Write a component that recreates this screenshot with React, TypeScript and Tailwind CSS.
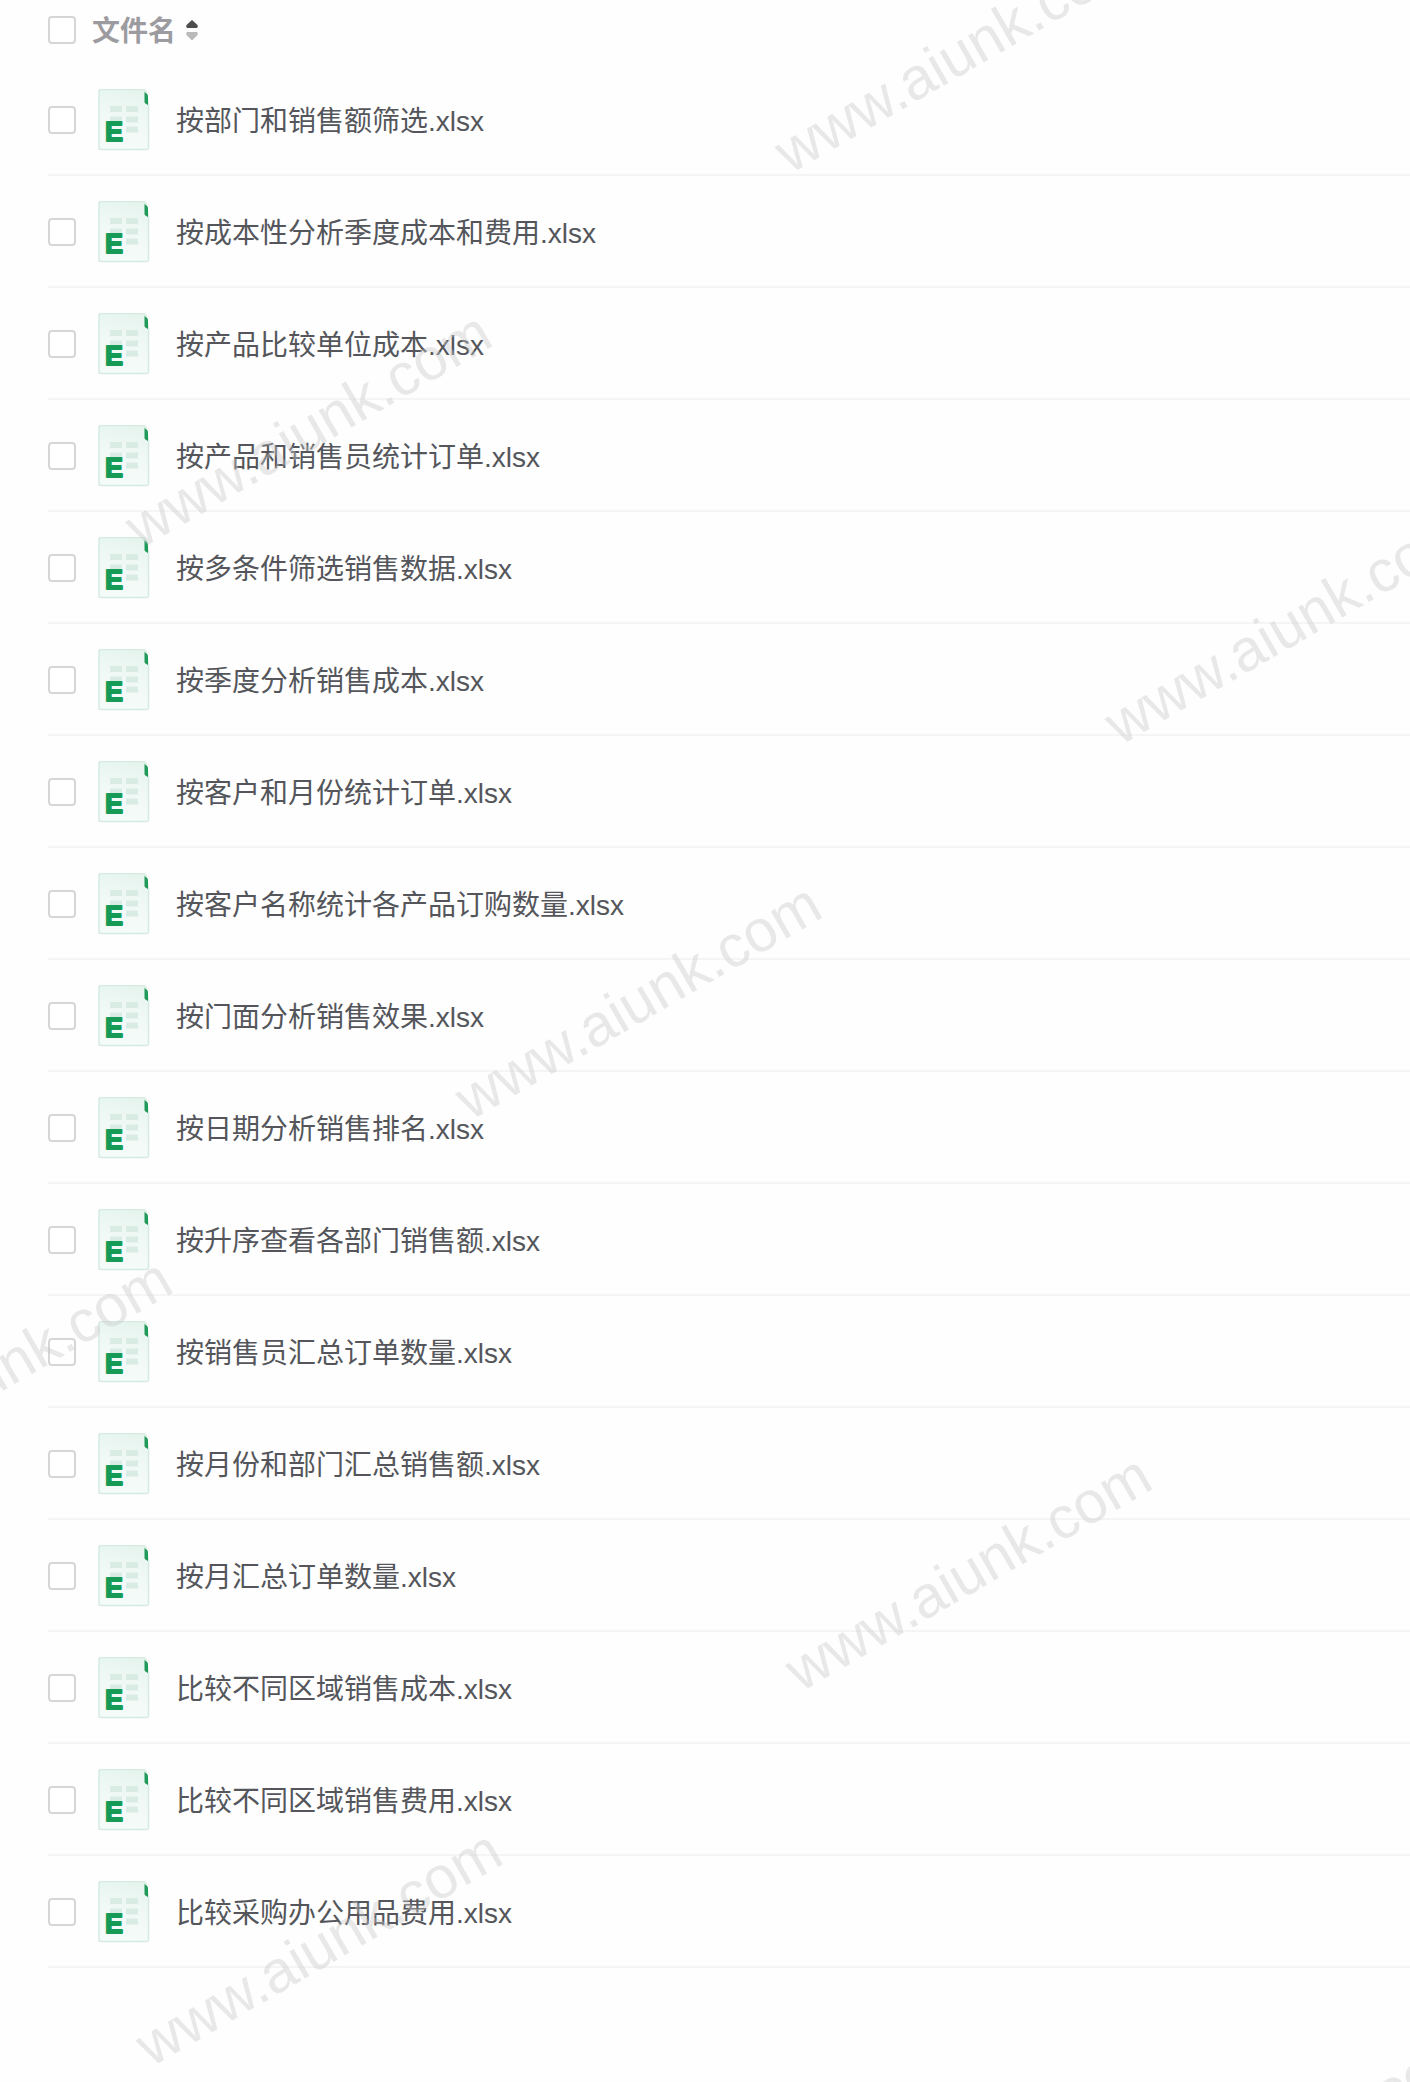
import { useState } from "react";

const files = [
  "按部门和销售额筛选.xlsx",
  "按成本性分析季度成本和费用.xlsx",
  "按产品比较单位成本.xlsx",
  "按产品和销售员统计订单.xlsx",
  "按多条件筛选销售数据.xlsx",
  "按季度分析销售成本.xlsx",
  "按客户和月份统计订单.xlsx",
  "按客户名称统计各产品订购数量.xlsx",
  "按门面分析销售效果.xlsx",
  "按日期分析销售排名.xlsx",
  "按升序查看各部门销售额.xlsx",
  "按销售员汇总订单数量.xlsx",
  "按月份和部门汇总销售额.xlsx",
  "按月汇总订单数量.xlsx",
  "比较不同区域销售成本.xlsx",
  "比较不同区域销售费用.xlsx",
  "比较采购办公用品费用.xlsx",
];

const checkboxClass =
  "block size-7 shrink-0 appearance-none rounded border-2 border-[#d6d6d8] bg-white checked:border-[#169b57] checked:bg-[#169b57]";

const SheetIcon = () => (
  <svg className="h-[62px] w-[52px] shrink-0" viewBox="0 0 52 62" aria-hidden="true">
    <defs>
      <linearGradient id="sheet" x1="0.6" y1="0" x2="0.4" y2="1">
        <stop offset="0" stopColor="#e6f4ee" />
        <stop offset="0.5" stopColor="#f1f9f6" />
        <stop offset="1" stopColor="#f5fbf9" />
      </linearGradient>
    </defs>
    <path
      d="M3 0.500H45Q47 0.500 48 2.500L50.500 16V58.500Q50.500 60.500 48.500 60.500H3Q1 60.500 1 58.500V2.500Q1 0.500 3 0.500Z"
      fill="url(#sheet)"
      stroke="#d5ebe2"
      strokeWidth="1.500"
    />
    <path d="M46.500 3L49 5Q50 6 50 7.500V16L47.500 14.500Q46.500 13.800 46.500 12.500Z" fill="#1f9a5a" />
    <g fill="#d9ece4">
      <rect x="12" y="17" width="12" height="6" />
      <rect x="28" y="17" width="12" height="6" />
      <rect x="12" y="27.500" width="12" height="6" />
      <rect x="28" y="27.500" width="12" height="6" />
      <rect x="28" y="37.500" width="12" height="6" />
    </g>
    <text
      x="7"
      y="52"
      fontSize="27"
      fontWeight="700"
      fontFamily="Liberation Sans, sans-serif"
      fill="#169b57"
      stroke="#169b57"
      strokeWidth="1.800"
      strokeLinejoin="round"
    >
      E
    </text>
  </svg>
);

const SortIcon = () => (
  <svg className="h-[22px] w-3" viewBox="0 0 12 22" aria-hidden="true">
    <path d="M6 1L11.500 6Q12.300 9 10.500 9H1.500Q-0.300 9 0.500 6Z" fill="#4d4d50" />
    <path d="M6 21.500L11.500 16Q12.300 13 10.500 13H1.500Q-0.300 13 0.500 16Z" fill="#b9b9bb" />
  </svg>
);

// Tiled site mark, laid over the whole list
const Watermark = () => (
  <div className="pointer-events-none absolute inset-0 overflow-hidden" aria-hidden="true">
    <div className="absolute top-[881px] left-[-534px] grid origin-top-left -rotate-30 auto-rows-[660px] grid-cols-[repeat(3,750px)]">
      {Array.from({ length: 12 }, (_, i) => (
        <span key={i} className="text-[59px] leading-[60px] text-[#c8c8c8]/40">
          www.aiunk.com
        </span>
      ))}
    </div>
  </div>
);

const App = () => {
  const [selected, setSelected] = useState<string[]>([]);
  const [ascending, setAscending] = useState(true);

  const rows = ascending ? files : [...files].reverse();

  const toggle = (name: string) => {
    setSelected((prev) =>
      prev.includes(name) ? prev.filter((n) => n !== name) : [...prev, name]
    );
  };

  return (
    <main className="relative min-h-screen bg-[#fefefe] pl-12 font-['Liberation_Sans','Noto_Sans_CJK_SC',sans-serif] text-[28px] leading-10 text-[#54565b]">
      <table className="w-full border-separate border-spacing-0">
        <thead>
          <tr className="h-16">
            <th className="w-11 p-0 pb-1">
              <input
                type="checkbox"
                aria-label="全选"
                className={checkboxClass}
                checked={selected.length === files.length}
                onChange={() => setSelected(selected.length === files.length ? [] : files)}
              />
            </th>
            <th className="p-0 pb-1 text-left">
              <button
                type="button"
                className="flex items-center gap-2.5 font-bold text-[#9c9ca0]"
                onClick={() => setAscending(!ascending)}
              >
                <span className="pt-1">文件名</span>
                <SortIcon />
              </button>
            </th>
          </tr>
        </thead>
        <tbody>
          {rows.map((name, i) => (
            <tr key={name} className="h-28">
              <td className="border-b-2 border-[#f5f5f6] p-0 pt-0.5">
                <input
                  id={`file-${i}`}
                  type="checkbox"
                  className={checkboxClass}
                  checked={selected.includes(name)}
                  onChange={() => toggle(name)}
                />
              </td>
              <td className="border-b-2 border-[#f5f5f6] p-0 pt-0.5 pl-1.5">
                <label htmlFor={`file-${i}`} className="flex items-center gap-[26px]">
                  <SheetIcon />
                  <span className="pt-1">{name}</span>
                </label>
              </td>
            </tr>
          ))}
        </tbody>
      </table>
      <Watermark />
    </main>
  );
};

export default App;
